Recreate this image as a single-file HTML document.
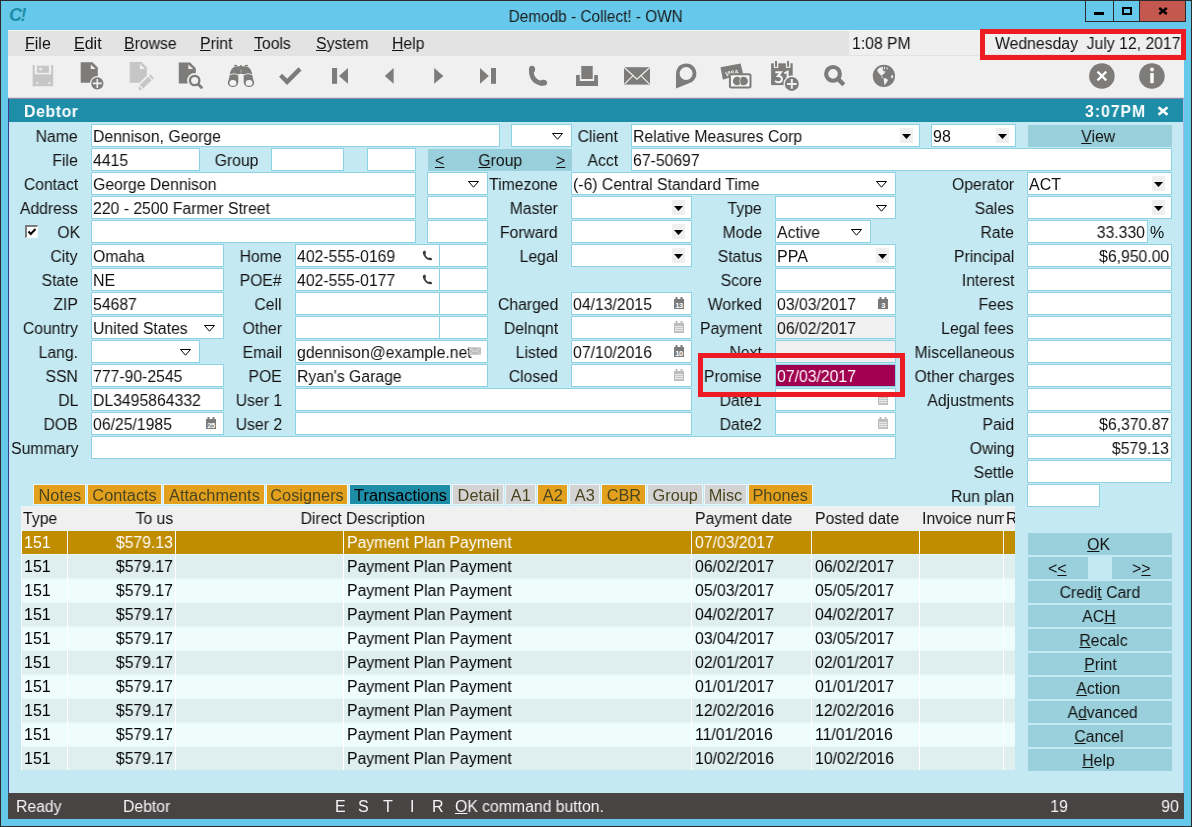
<!DOCTYPE html><html><head><meta charset="utf-8"><style>
*{box-sizing:border-box}
html,body{margin:0;padding:0}
body{width:1192px;height:827px;overflow:hidden;position:relative;background:#66c8ea;font-family:"Liberation Sans",sans-serif;font-size:16px;line-height:20px;color:#111}
div,span{position:absolute;white-space:nowrap}
i{font-style:normal;display:inline-block;transform:scaleX(0.985);will-change:transform}
i.l{transform-origin:0 0}
i.r{transform-origin:100% 0}
i.c{transform-origin:50% 0}
.f{background:#fff;border:1px solid #8dd2e3;height:23px;overflow:hidden}
.btn{background:#9ad0dc}
u{text-decoration:underline;text-underline-offset:1px;text-decoration-thickness:1px}
.tab{top:484px;height:21px;border:1px solid #eaf6f8}
.dd{width:13px;height:15px;background:#efefef;top:3px}
svg{position:absolute}
</style></head><body>
<div style="left:0;top:0;width:1192px;height:827px;border:1px solid #2b2b2b"></div>
<div style="left:9px;top:5px;font:bold italic 18px/20px 'Liberation Sans',sans-serif;color:#1e8ea8;letter-spacing:-1.5px">C!</div>
<div style="left:296px;width:600px;text-align:center;top:7px;color:#1a1a1a"><i class="c" style="transform:scaleX(0.96)">Demodb - Collect! - OWN</i></div>
<div style="left:1085px;top:0;width:101px;height:22px;border:1px solid #2b2b2b;border-top:none"></div>
<div style="left:1113px;top:0;width:1px;height:22px;background:#2b2b2b"></div>
<div style="left:1139px;top:0;width:1px;height:22px;background:#2b2b2b"></div>
<div style="left:1140px;top:1px;width:45px;height:20px;background:#c4584f"></div>
<div style="left:1094px;top:12px;width:10px;height:3px;background:#000"></div>
<div style="left:1122px;top:7px;width:10px;height:8px;border:2px solid #000"></div>
<svg style="left:1158px;top:7px" width="10" height="8"><path d="M1.2 1L8.8 7M8.8 1L1.2 7" stroke="#000" stroke-width="2.4"/></svg>
<div style="left:8px;top:30px;width:1176px;height:26px;background:#e3e3e3;border-top:1px solid #f4f4f4"></div>
<div style="left:25px;top:34px;"><i class="l"><u>F</u>ile</i></div>
<div style="left:74px;top:34px;"><i class="l"><u>E</u>dit</i></div>
<div style="left:124px;top:34px;"><i class="l"><u>B</u>rowse</i></div>
<div style="left:200px;top:34px;"><i class="l"><u>P</u>rint</i></div>
<div style="left:254px;top:34px;"><i class="l"><u>T</u>ools</i></div>
<div style="left:316px;top:34px;"><i class="l"><u>S</u>ystem</i></div>
<div style="left:392px;top:34px;"><i class="l"><u>H</u>elp</i></div>
<div style="left:849px;top:31px;width:131px;height:24px;background:#efefef"></div>
<div style="left:852px;top:34px;"><i class="l">1:08 PM</i></div>
<div style="left:985px;top:34px;width:196px;height:20px;background:#efefef"></div>
<div style="left:995px;top:34px;"><i class="l">Wednesday&nbsp; July 12, 2017</i></div>
<div style="left:980px;top:29px;width:206px;height:31px;border:5px solid #ed1c24;z-index:5"></div>
<div style="left:8px;top:56px;width:1176px;height:42px;background:#f0f0f0;border-bottom:1px solid #d9d9d9"></div>
<svg style="left:0;top:0;will-change:transform" width="1192" height="100" viewBox="0 0 1192 100">
<g fill="#c6c6c6">
 <rect x="32.7" y="65" width="2" height="10"/><rect x="51.2" y="65" width="2" height="10"/>
 <rect x="32.7" y="74.4" width="20.5" height="11.8"/>
 <rect x="37" y="65.7" width="11.9" height="7.1"/>
</g>
<rect x="39.2" y="67.8" width="2.8" height="2.6" fill="#ececec"/>
<rect x="36" y="82.3" width="2.4" height="1.6" fill="#ececec"/><rect x="48" y="82.3" width="2.4" height="1.6" fill="#ececec"/>
<!-- new doc -->
<path d="M80.7 62.2H92.4L97.8 67.6V82.8H80.7Z" fill="#7d7c7a"/>
<path d="M90.8 64.6V69H95.6Z" fill="#f0f0f0"/>
<circle cx="97.3" cy="83.4" r="7.3" fill="#f0f0f0"/>
<circle cx="97.3" cy="83.4" r="6.1" fill="#7d7c7a"/>
<path d="M92.8 83.4H101.8M97.3 78.9V87.9" stroke="#f0f0f0" stroke-width="1.6"/>
<!-- edit doc -->
<path d="M129.7 62.1H141.5L146.9 67.2V75.5L139.5 82.8H129.7Z" fill="#c6c6c6"/>
<path d="M139.9 63.9V69.1H145Z" fill="#f0f0f0"/>
<path d="M141.45 86.7L149.9 78.55" stroke="#c6c6c6" stroke-width="4.9"/>
<path d="M150.8 77.65L152.3 76.15" stroke="#c6c6c6" stroke-width="4.9"/>
<path d="M139 86L142.4 89.6L138.8 90Z" fill="#c6c6c6"/>
<!-- doc search -->
<path d="M178.8 62.5H190L195.8 68.3V83.5H178.8Z" fill="#7d7c7a"/>
<path d="M188.4 64.6V69H193.2Z" fill="#f0f0f0"/>
<circle cx="194.7" cy="80.5" r="7.6" fill="#f0f0f0"/>
<path d="M198 84L202.2 88.2" stroke="#7d7c7a" stroke-width="2.8"/>
<circle cx="194.7" cy="80.5" r="4.7" fill="none" stroke="#7d7c7a" stroke-width="2.3"/>
<!-- binoculars -->
<path d="M229.8 74C230.8 69 233.5 66.4 236.5 66.3H245.5C248.5 66.4 251.2 69 252.2 74Z" fill="#7d7c7a"/>
<rect x="234.2" y="64.9" width="2.9" height="1.2" fill="#7d7c7a"/><rect x="245" y="64.9" width="2.9" height="1.2" fill="#7d7c7a"/>
<circle cx="241" cy="66" r="1" fill="#7d7c7a"/>
<rect x="240.5" y="69.6" width="1" height="3" fill="#a8a8a8"/>
<path d="M230 74L228 82.8H238.3V74Z" fill="#7d7c7a"/>
<path d="M252 74L254 82.8H243.7V74Z" fill="#7d7c7a"/>
<path d="M229.5 74.8Q234 72.2 238.8 75.2M243.2 75.2Q248 72.2 252.5 74.8" stroke="#e8e8e8" stroke-width="0.9" fill="none"/>
<path d="M241 73.2L239.4 76V88H242.6V76Z" fill="#f0f0f0"/>
<ellipse cx="232.9" cy="82.9" rx="5.1" ry="4.2" fill="#7d7c7a"/>
<ellipse cx="249.1" cy="82.9" rx="5.1" ry="4.2" fill="#7d7c7a"/>
<ellipse cx="232.9" cy="82.9" rx="3.45" ry="2.9" fill="#f4f4f4"/>
<ellipse cx="249.1" cy="82.9" rx="3.45" ry="2.9" fill="#f4f4f4"/>
<!-- check -->
<path d="M280.6 75.3L287.1 81.8L300 68.9" stroke="#7d7c7a" stroke-width="4.4" fill="none"/>
<!-- first/prev/next/last -->
<rect x="332" y="68" width="5.1" height="15.8" fill="#7d7c7a"/>
<path d="M339 75.9L348 68V83.8Z" fill="#7d7c7a"/>
<path d="M384.8 75.9L393.6 68V83.8Z" fill="#7d7c7a"/>
<path d="M434.2 68V83.8L443.4 75.9Z" fill="#7d7c7a"/>
<path d="M480 68V83.8L488.8 75.9Z" fill="#7d7c7a"/>
<rect x="491" y="68" width="5" height="15.8" fill="#7d7c7a"/>
<!-- phone -->
<path d="M531.3 70.5Q531.2 81.5 542.5 83.8" stroke="#7d7c7a" stroke-width="4.6" fill="none"/>
<ellipse cx="532" cy="69.3" rx="3.1" ry="3.6" fill="#7d7c7a"/>
<ellipse cx="543.3" cy="82.8" rx="3.8" ry="3.0" fill="#7d7c7a"/>
<!-- inbox -->
<rect x="576.1" y="75" width="3.7" height="11" fill="#7d7c7a"/>
<rect x="594.2" y="75" width="3.7" height="11" fill="#7d7c7a"/>
<rect x="576.1" y="81" width="21.8" height="5" fill="#7d7c7a"/>
<rect x="581.3" y="66" width="11.4" height="13" fill="#7d7c7a"/>
<!-- mail -->
<rect x="624" y="67.2" width="26" height="17.4" fill="#7d7c7a"/>
<path d="M624.3 67.5L637 79.2L649.7 67.5M624.5 84.2L632.6 76.2M649.5 84.2L641.4 76.2" stroke="#f4f4f4" stroke-width="1.1" fill="none"/>
<!-- chat pin -->
<path d="M676 73.5A10.2 10.2 0 1 1 692 82L676 88.6Z" fill="#7d7c7a"/>
<circle cx="686.1" cy="73.5" r="6.5" fill="#f0f0f0"/>
<!-- visa -->
<path d="M720.5 67.3L740.6 63.6L743 73.3L722.9 79.8Z" fill="#7d7c7a"/>
<text x="725" y="75.2" font-family="Liberation Sans" font-size="6.6" font-weight="bold" fill="#f4f4f4" textLength="13.8" lengthAdjust="spacingAndGlyphs" transform="rotate(-11 732 72)">VISA</text>
<rect x="729.9" y="74.3" width="20.6" height="13.3" rx="1.5" fill="#f4f4f4" stroke="#7d7c7a" stroke-width="2"/>
<circle cx="737.2" cy="81" r="4.3" fill="#7d7c7a"/><circle cx="743.6" cy="81" r="4.3" fill="#7d7c7a"/>
<path d="M740.4 77.8Q739.2 81 740.4 84.2" stroke="#ddd" stroke-width="0.8" fill="none"/>
<!-- calendar+ -->
<rect x="771.1" y="63.3" width="21.6" height="21.8" fill="#7d7c7a"/>
<rect x="773.8" y="63" width="4.5" height="4.9" fill="#f0f0f0"/><rect x="785.9" y="63" width="4.5" height="4.9" fill="#f0f0f0"/>
<rect x="775" y="60.9" width="2" height="5.9" fill="#7d7c7a"/><rect x="787.1" y="60.9" width="1.9" height="5.9" fill="#7d7c7a"/>
<path d="M775.3 72.2H781L777.9 76.1C780.5 76.1 781.9 77.3 781.9 79.3C781.9 81.3 780.4 82.2 778.5 82.2C777 82.2 775.9 81.7 775.1 80.8" stroke="#f4f4f4" stroke-width="2" fill="none"/>
<path d="M784.4 73.4L787.6 71.6V83" stroke="#f4f4f4" stroke-width="2" fill="none"/>
<circle cx="791.8" cy="83.9" r="8.3" fill="#f0f0f0"/>
<circle cx="791.8" cy="83.9" r="7" fill="#7d7c7a"/>
<path d="M786.9 83.9H796.7M791.8 79.1V88.8" stroke="#f0f0f0" stroke-width="2"/>
<!-- search -->
<path d="M838.5 79.4L843.8 84.7" stroke="#7d7c7a" stroke-width="4.4"/>
<circle cx="833" cy="73.9" r="6.85" fill="none" stroke="#7d7c7a" stroke-width="4.1"/>
<!-- globe -->
<circle cx="883.9" cy="75.9" r="11.1" fill="#7d7c7a"/>
<path d="M877.1 70.3L879.2 67.7L882.9 66.8L882.7 69.3L883.5 71.2L885.6 71.2L884.6 73.2L882.7 74.7L881.4 75.9L880.8 75.3L878.4 72.8Z" fill="#f0f0f0"/>
<path d="M883.9 66.8H884.9V69.2H883.9Z" fill="#f0f0f0"/>
<path d="M886.3 67.3L887.6 67.7L888 69.5L886.8 69.2Z" fill="#f0f0f0"/>
<circle cx="882.1" cy="77.2" r="0.7" fill="#f0f0f0"/>
<path d="M883.5 78.2L885.8 78.2L888.1 80.1L886.6 82.4L884.6 85.2L884.1 83.2L883.9 80.9Z" fill="#f0f0f0"/>
<path d="M891.2 75.5L892.8 74.9L893.2 77.4L891.8 78.2L891 77.4Z" fill="#f0f0f0"/>
<!-- x circle -->
<circle cx="1101.9" cy="76" r="12.8" fill="#7d7c7a"/>
<path d="M1097.5 71.6L1106.3 80.4M1106.3 71.6L1097.5 80.4" stroke="#fff" stroke-width="2.2"/>
<!-- info circle -->
<circle cx="1151.9" cy="76" r="12.8" fill="#7d7c7a"/>
<circle cx="1152" cy="69.5" r="1.9" fill="#fff"/>
<rect x="1150.3" y="73" width="3.4" height="10.2" fill="#fff"/>
</svg>
<div style="left:8px;top:98px;width:1176px;height:24px;background:#1e8ea8;border-left:1px solid #3d3d8c;border-top:1px solid #8f86b4;border-right:1px solid #a8b8e0"></div>
<div style="left:24px;top:102px;color:#fff;font-weight:bold;letter-spacing:0.65px"><i class="l">Debtor</i></div>
<div style="left:1085px;top:102px;color:#fff;font-weight:bold;letter-spacing:1px"><i class="l">3:07PM</i></div>
<svg style="left:1157px;top:106px" width="12" height="10"><path d="M1.5 1.2L10.5 8.8M10.5 1.2L1.5 8.8" stroke="#fff" stroke-width="2.6"/></svg>
<div style="left:8px;top:122px;width:1176px;height:671px;background:#c5e9f2;border-left:1px solid #3d3d8c;border-right:1px solid #a8b8e0"></div>
<div style="left:8px;top:793px;width:1176px;height:26px;background:#484444"></div>
<div style="left:16px;top:797px;color:#f4f4f4"><i class="l">Ready</i></div>
<div style="left:123px;top:797px;color:#f4f4f4"><i class="l">Debtor</i></div>
<div style="left:335px;top:797px;color:#f4f4f4"><i class="l">E</i></div>
<div style="left:358px;top:797px;color:#f4f4f4"><i class="l">S</i></div>
<div style="left:383px;top:797px;color:#f4f4f4"><i class="l">T</i></div>
<div style="left:410px;top:797px;color:#f4f4f4"><i class="l">I</i></div>
<div style="left:432px;top:797px;color:#f4f4f4"><i class="l">R</i></div>
<div style="left:455px;top:797px;color:#f4f4f4"><i class="l"><u>O</u>K command button.</i></div>
<div style="right:124px;top:797px;color:#f4f4f4"><i class="r">19</i></div>
<div style="right:13px;top:797px;color:#f4f4f4"><i class="r">90</i></div>
<div style="left:0;top:826px;width:1192px;height:1px;background:#2b2b2b"></div>
<div style="right:1114px;top:127px;"><i class="r">Name</i></div>
<div class="f" style="left:91px;top:124px;width:409px"><div style="left:1px;top:2px"><i class="l">Dennison, George</i></div></div>
<div class="f" style="left:511px;top:124px;width:61px"><svg style="right:8px;top:8px" width="11" height="7"><path d="M0.5 0.5H10.5L5.5 6.2Z" fill="none" stroke="#000" stroke-width="1"/></svg></div>
<div style="right:574px;top:127px;"><i class="r">Client</i></div>
<div class="f" style="left:631px;top:124px;width:289px"><div style="left:1px;top:2px"><i class="l">Relative Measures Corp</i></div><div class="dd" style="right:6px"><svg style="left:2px;top:6px" width="9" height="5"><path d="M0 0H9L4.5 5Z" fill="#000"/></svg></div></div>
<div class="f" style="left:931px;top:124px;width:85px"><div style="left:1px;top:2px"><i class="l">98</i></div><div class="dd" style="right:6px"><svg style="left:2px;top:6px" width="9" height="5"><path d="M0 0H9L4.5 5Z" fill="#000"/></svg></div></div>
<div class="btn" style="left:1028px;top:125px;width:144px;height:22px"></div>
<div style="left:798.5px;width:600px;text-align:center;top:127px;"><i class="c"><u>V</u>iew</i></div>
<div style="right:1114px;top:151px;"><i class="r">File</i></div>
<div class="f" style="left:91px;top:148px;width:109px"><div style="left:1px;top:2px"><i class="l">4415</i></div></div>
<div style="right:934px;top:151px;"><i class="r">Group</i></div>
<div class="f" style="left:271px;top:148px;width:73px"></div>
<div class="f" style="left:367px;top:148px;width:49px"></div>
<div class="btn" style="left:428px;top:149px;width:144px;height:22px"></div>
<div style="left:200.0px;width:600px;text-align:center;top:151px;"><i class="c"><u>G</u>roup</i></div>
<div style="left:435px;top:151px;"><i class="l"><u>&lt;</u></i></div>
<div style="right:627px;top:151px;"><i class="r"><u>&gt;</u></i></div>
<div style="right:574px;top:151px;"><i class="r">Acct</i></div>
<div class="f" style="left:631px;top:148px;width:541px"><div style="left:1px;top:2px"><i class="l">67-50697</i></div></div>
<div style="right:1114px;top:175px;"><i class="r">Contact</i></div>
<div class="f" style="left:91px;top:172px;width:325px"><div style="left:1px;top:2px"><i class="l">George Dennison</i></div></div>
<div class="f" style="left:427px;top:172px;width:61px"><svg style="right:8px;top:8px" width="11" height="7"><path d="M0.5 0.5H10.5L5.5 6.2Z" fill="none" stroke="#000" stroke-width="1"/></svg></div>
<div style="right:634px;top:175px;"><i class="r">Timezone</i></div>
<div class="f" style="left:571px;top:172px;width:325px"><div style="left:1px;top:2px"><i class="l">(-6) Central Standard Time</i></div><svg style="right:8px;top:8px" width="11" height="7"><path d="M0.5 0.5H10.5L5.5 6.2Z" fill="none" stroke="#000" stroke-width="1"/></svg></div>
<div style="right:178px;top:175px;"><i class="r">Operator</i></div>
<div class="f" style="left:1027px;top:172px;width:145px"><div style="left:1px;top:2px"><i class="l">ACT</i></div><div class="dd" style="right:6px"><svg style="left:2px;top:6px" width="9" height="5"><path d="M0 0H9L4.5 5Z" fill="#000"/></svg></div></div>
<div style="right:1114px;top:199px;"><i class="r">Address</i></div>
<div class="f" style="left:91px;top:196px;width:325px"><div style="left:1px;top:2px"><i class="l">220 - 2500 Farmer Street</i></div></div>
<div class="f" style="left:427px;top:196px;width:61px"></div>
<div style="right:634px;top:199px;"><i class="r">Master</i></div>
<div class="f" style="left:571px;top:196px;width:121px"><div class="dd" style="right:6px"><svg style="left:2px;top:6px" width="9" height="5"><path d="M0 0H9L4.5 5Z" fill="#000"/></svg></div></div>
<div style="right:430px;top:199px;"><i class="r">Type</i></div>
<div class="f" style="left:775px;top:196px;width:121px"><svg style="right:8px;top:8px" width="11" height="7"><path d="M0.5 0.5H10.5L5.5 6.2Z" fill="none" stroke="#000" stroke-width="1"/></svg></div>
<div style="right:178px;top:199px;"><i class="r">Sales</i></div>
<div class="f" style="left:1027px;top:196px;width:145px"><div class="dd" style="right:6px"><svg style="left:2px;top:6px" width="9" height="5"><path d="M0 0H9L4.5 5Z" fill="#000"/></svg></div></div>
<div style="left:25px;top:225px;width:13px;height:13px;border-style:solid;border-width:2px 1px 1px 2px;border-color:#7a7a7a #f8f8f8 #f8f8f8 #7a7a7a;background:#fff"><svg style="left:0;top:0" width="10" height="10"><path d="M1.5 4.5L3.8 7L8.5 2" stroke="#000" stroke-width="2" fill="none"/></svg></div>
<div style="right:1112px;top:223px;"><i class="r">OK</i></div>
<div class="f" style="left:91px;top:220px;width:325px"></div>
<div class="f" style="left:427px;top:220px;width:61px"></div>
<div style="right:634px;top:223px;"><i class="r">Forward</i></div>
<div class="f" style="left:571px;top:220px;width:121px"><div class="dd" style="right:6px"><svg style="left:2px;top:6px" width="9" height="5"><path d="M0 0H9L4.5 5Z" fill="#000"/></svg></div></div>
<div style="right:430px;top:223px;"><i class="r">Mode</i></div>
<div class="f" style="left:775px;top:220px;width:96px"><div style="left:1px;top:2px"><i class="l">Active</i></div><svg style="right:8px;top:8px" width="11" height="7"><path d="M0.5 0.5H10.5L5.5 6.2Z" fill="none" stroke="#000" stroke-width="1"/></svg></div>
<div style="right:178px;top:223px;"><i class="r">Rate</i></div>
<div class="f" style="left:1027px;top:220px;width:121px"><div style="right:2px;top:2px"><i class="r">33.330</i></div></div>
<div style="left:1150px;top:223px;"><i class="l">%</i></div>
<div style="right:1114px;top:247px;"><i class="r">City</i></div>
<div class="f" style="left:91px;top:244px;width:133px"><div style="left:1px;top:2px"><i class="l">Omaha</i></div></div>
<div style="right:910px;top:247px;"><i class="r">Home</i></div>
<div class="f" style="left:295px;top:244px;width:145px"><div style="left:1px;top:2px"><i class="l">402-555-0169</i></div><svg style="right:6px;top:5px" width="11" height="11"><path d="M2.3 0.6C0.5 1.2 0.4 3.4 1.8 5.8C3.3 8.4 5.6 10.2 7.8 10.2L9.9 9.9C10.4 9.3 10.1 8.4 9.2 8L7.7 7.4L6.3 8.1C5.1 7.5 3.7 5.8 3.3 4.6L4.1 3.2L3.4 1Z" fill="#3a3a3a"/></svg></div>
<div class="f" style="left:439px;top:244px;width:49px"></div>
<div style="right:634px;top:247px;"><i class="r">Legal</i></div>
<div class="f" style="left:571px;top:244px;width:121px"><div class="dd" style="right:6px"><svg style="left:2px;top:6px" width="9" height="5"><path d="M0 0H9L4.5 5Z" fill="#000"/></svg></div></div>
<div style="right:430px;top:247px;"><i class="r">Status</i></div>
<div class="f" style="left:775px;top:244px;width:121px"><div style="left:1px;top:2px"><i class="l">PPA</i></div><div class="dd" style="right:6px"><svg style="left:2px;top:6px" width="9" height="5"><path d="M0 0H9L4.5 5Z" fill="#000"/></svg></div></div>
<div style="right:178px;top:247px;"><i class="r">Principal</i></div>
<div class="f" style="left:1027px;top:244px;width:145px"><div style="right:2px;top:2px"><i class="r">$6,950.00</i></div></div>
<div style="right:1114px;top:271px;"><i class="r">State</i></div>
<div class="f" style="left:91px;top:268px;width:133px"><div style="left:1px;top:2px"><i class="l">NE</i></div></div>
<div style="right:910px;top:271px;"><i class="r">POE#</i></div>
<div class="f" style="left:295px;top:268px;width:145px"><div style="left:1px;top:2px"><i class="l">402-555-0177</i></div><svg style="right:6px;top:5px" width="11" height="11"><path d="M2.3 0.6C0.5 1.2 0.4 3.4 1.8 5.8C3.3 8.4 5.6 10.2 7.8 10.2L9.9 9.9C10.4 9.3 10.1 8.4 9.2 8L7.7 7.4L6.3 8.1C5.1 7.5 3.7 5.8 3.3 4.6L4.1 3.2L3.4 1Z" fill="#3a3a3a"/></svg></div>
<div class="f" style="left:439px;top:268px;width:49px"></div>
<div style="right:430px;top:271px;"><i class="r">Score</i></div>
<div class="f" style="left:775px;top:268px;width:121px"></div>
<div style="right:178px;top:271px;"><i class="r">Interest</i></div>
<div class="f" style="left:1027px;top:268px;width:145px"></div>
<div style="right:1114px;top:295px;"><i class="r">ZIP</i></div>
<div class="f" style="left:91px;top:292px;width:133px"><div style="left:1px;top:2px"><i class="l">54687</i></div></div>
<div style="right:910px;top:295px;"><i class="r">Cell</i></div>
<div class="f" style="left:295px;top:292px;width:145px"></div>
<div class="f" style="left:439px;top:292px;width:49px"></div>
<div style="right:634px;top:295px;"><i class="r">Charged</i></div>
<div class="f" style="left:571px;top:292px;width:121px"><div style="left:1px;top:2px"><i class="l">04/13/2015</i></div><svg style="right:7px;top:4px" width="10" height="12"><rect x="0" y="2" width="10" height="10" fill="#7a7a7a"/><rect x="1.5" y="0" width="2" height="3" fill="#7a7a7a"/><rect x="6.5" y="0" width="2" height="3" fill="#7a7a7a"/><text x="5" y="10.6" font-size="7.5" fill="#fff" text-anchor="middle" font-family="Liberation Sans" font-weight="bold" letter-spacing="-0.5">13</text></svg></div>
<div style="right:430px;top:295px;"><i class="r">Worked</i></div>
<div class="f" style="left:775px;top:292px;width:121px"><div style="left:1px;top:2px"><i class="l">03/03/2017</i></div><svg style="right:7px;top:4px" width="10" height="12"><rect x="0" y="2" width="10" height="10" fill="#7a7a7a"/><rect x="1.5" y="0" width="2" height="3" fill="#7a7a7a"/><rect x="6.5" y="0" width="2" height="3" fill="#7a7a7a"/><text x="5" y="10.6" font-size="7.5" fill="#fff" text-anchor="middle" font-family="Liberation Sans" font-weight="bold" letter-spacing="-0.5">3</text></svg></div>
<div style="right:178px;top:295px;"><i class="r">Fees</i></div>
<div class="f" style="left:1027px;top:292px;width:145px"></div>
<div style="right:1114px;top:319px;"><i class="r">Country</i></div>
<div class="f" style="left:91px;top:316px;width:133px"><div style="left:1px;top:2px"><i class="l">United States</i></div><svg style="right:8px;top:8px" width="11" height="7"><path d="M0.5 0.5H10.5L5.5 6.2Z" fill="none" stroke="#000" stroke-width="1"/></svg></div>
<div style="right:910px;top:319px;"><i class="r">Other</i></div>
<div class="f" style="left:295px;top:316px;width:145px"></div>
<div class="f" style="left:439px;top:316px;width:49px"></div>
<div style="right:634px;top:319px;"><i class="r">Delnqnt</i></div>
<div class="f" style="left:571px;top:316px;width:121px"><svg style="right:7px;top:4px" width="10" height="12"><rect x="0" y="2" width="10" height="10" fill="#bdbdbd"/><rect x="1.5" y="0" width="2" height="3" fill="#bdbdbd"/><rect x="6.5" y="0" width="2" height="3" fill="#bdbdbd"/><rect x="1" y="5" width="8" height="1.2" fill="#e8e8e8"/><rect x="1" y="7" width="8" height="1.2" fill="#e8e8e8"/><rect x="1" y="9" width="8" height="1.2" fill="#e8e8e8"/></svg></div>
<div style="right:430px;top:319px;"><i class="r">Payment</i></div>
<div class="f" style="left:775px;top:316px;width:121px;background:#f0f0f0"><div style="left:1px;top:2px"><i class="l">06/02/2017</i></div></div>
<div style="right:178px;top:319px;"><i class="r">Legal fees</i></div>
<div class="f" style="left:1027px;top:316px;width:145px"></div>
<div style="right:1114px;top:343px;"><i class="r">Lang.</i></div>
<div class="f" style="left:91px;top:340px;width:109px"><svg style="right:8px;top:8px" width="11" height="7"><path d="M0.5 0.5H10.5L5.5 6.2Z" fill="none" stroke="#000" stroke-width="1"/></svg></div>
<div style="right:910px;top:343px;"><i class="r">Email</i></div>
<div class="f" style="left:295px;top:340px;width:193px"><div style="left:1px;top:2px"><i class="l">gdennison@example.net</i></div><svg style="right:6px;top:6px" width="12" height="8"><rect x="0" y="0.3" width="12" height="7.4" rx="0.6" fill="#bdbdbd"/><path d="M0.6 0.8L6 4.8L11.4 0.8M0.6 7.3L4.2 3.6M11.4 7.3L7.8 3.6" stroke="#e6e6e6" stroke-width="0.8" fill="none"/></svg></div>
<div style="right:634px;top:343px;"><i class="r">Listed</i></div>
<div class="f" style="left:571px;top:340px;width:121px"><div style="left:1px;top:2px"><i class="l">07/10/2016</i></div><svg style="right:7px;top:4px" width="10" height="12"><rect x="0" y="2" width="10" height="10" fill="#7a7a7a"/><rect x="1.5" y="0" width="2" height="3" fill="#7a7a7a"/><rect x="6.5" y="0" width="2" height="3" fill="#7a7a7a"/><text x="5" y="10.6" font-size="7.5" fill="#fff" text-anchor="middle" font-family="Liberation Sans" font-weight="bold" letter-spacing="-0.5">10</text></svg></div>
<div style="right:430px;top:343px;"><i class="r">Next</i></div>
<div class="f" style="left:775px;top:340px;width:121px;background:#f0f0f0"></div>
<div style="right:178px;top:343px;"><i class="r">Miscellaneous</i></div>
<div class="f" style="left:1027px;top:340px;width:145px"></div>
<div style="right:1114px;top:367px;"><i class="r">SSN</i></div>
<div class="f" style="left:91px;top:364px;width:133px"><div style="left:1px;top:2px"><i class="l">777-90-2545</i></div></div>
<div style="right:910px;top:367px;"><i class="r">POE</i></div>
<div class="f" style="left:295px;top:364px;width:193px"><div style="left:1px;top:2px"><i class="l">Ryan's Garage</i></div></div>
<div style="right:634px;top:367px;"><i class="r">Closed</i></div>
<div class="f" style="left:571px;top:364px;width:121px"><svg style="right:7px;top:4px" width="10" height="12"><rect x="0" y="2" width="10" height="10" fill="#bdbdbd"/><rect x="1.5" y="0" width="2" height="3" fill="#bdbdbd"/><rect x="6.5" y="0" width="2" height="3" fill="#bdbdbd"/><rect x="1" y="5" width="8" height="1.2" fill="#e8e8e8"/><rect x="1" y="7" width="8" height="1.2" fill="#e8e8e8"/><rect x="1" y="9" width="8" height="1.2" fill="#e8e8e8"/></svg></div>
<div style="right:430px;top:367px;"><i class="r">Promise</i></div>
<div class="f" style="left:775px;top:364px;width:121px;background:#a0004f"><div style="left:1px;top:2px;color:#fff"><i class="l">07/03/2017</i></div></div>
<div style="right:178px;top:367px;"><i class="r">Other charges</i></div>
<div class="f" style="left:1027px;top:364px;width:145px"></div>
<div style="right:1114px;top:391px;"><i class="r">DL</i></div>
<div class="f" style="left:91px;top:388px;width:133px"><div style="left:1px;top:2px"><i class="l">DL3495864332</i></div></div>
<div style="right:910px;top:391px;"><i class="r">User 1</i></div>
<div class="f" style="left:295px;top:388px;width:397px"></div>
<div style="right:430px;top:391px;"><i class="r">Date1</i></div>
<div class="f" style="left:775px;top:388px;width:121px"><svg style="right:7px;top:4px" width="10" height="12"><rect x="0" y="2" width="10" height="10" fill="#bdbdbd"/><rect x="1.5" y="0" width="2" height="3" fill="#bdbdbd"/><rect x="6.5" y="0" width="2" height="3" fill="#bdbdbd"/><rect x="1" y="5" width="8" height="1.2" fill="#e8e8e8"/><rect x="1" y="7" width="8" height="1.2" fill="#e8e8e8"/><rect x="1" y="9" width="8" height="1.2" fill="#e8e8e8"/></svg></div>
<div style="right:178px;top:391px;"><i class="r">Adjustments</i></div>
<div class="f" style="left:1027px;top:388px;width:145px"></div>
<div style="right:1114px;top:415px;"><i class="r">DOB</i></div>
<div class="f" style="left:91px;top:412px;width:133px"><div style="left:1px;top:2px"><i class="l">06/25/1985</i></div><svg style="right:7px;top:4px" width="10" height="12"><rect x="0" y="2" width="10" height="10" fill="#7a7a7a"/><rect x="1.5" y="0" width="2" height="3" fill="#7a7a7a"/><rect x="6.5" y="0" width="2" height="3" fill="#7a7a7a"/><text x="5" y="10.6" font-size="7.5" fill="#fff" text-anchor="middle" font-family="Liberation Sans" font-weight="bold" letter-spacing="-0.5">25</text></svg></div>
<div style="right:910px;top:415px;"><i class="r">User 2</i></div>
<div class="f" style="left:295px;top:412px;width:397px"></div>
<div style="right:430px;top:415px;"><i class="r">Date2</i></div>
<div class="f" style="left:775px;top:412px;width:121px"><svg style="right:7px;top:4px" width="10" height="12"><rect x="0" y="2" width="10" height="10" fill="#bdbdbd"/><rect x="1.5" y="0" width="2" height="3" fill="#bdbdbd"/><rect x="6.5" y="0" width="2" height="3" fill="#bdbdbd"/><rect x="1" y="5" width="8" height="1.2" fill="#e8e8e8"/><rect x="1" y="7" width="8" height="1.2" fill="#e8e8e8"/><rect x="1" y="9" width="8" height="1.2" fill="#e8e8e8"/></svg></div>
<div style="right:178px;top:415px;"><i class="r">Paid</i></div>
<div class="f" style="left:1027px;top:412px;width:145px"><div style="right:2px;top:2px"><i class="r">$6,370.87</i></div></div>
<div style="right:1114px;top:439px;"><i class="r">Summary</i></div>
<div class="f" style="left:91px;top:436px;width:805px"></div>
<div style="right:178px;top:439px;"><i class="r">Owing</i></div>
<div class="f" style="left:1027px;top:436px;width:145px"><div style="right:2px;top:2px"><i class="r">$579.13</i></div></div>
<div style="right:178px;top:463px;"><i class="r">Settle</i></div>
<div class="f" style="left:1027px;top:460px;width:145px"></div>
<div style="right:178px;top:487px;"><i class="r">Run plan</i></div>
<div class="f" style="left:1027px;top:484px;width:73px"></div>
<div style="left:698px;top:353px;width:207px;height:44px;border:5px solid #ed1c24;z-index:5"></div>
<div class="tab" style="left:33px;width:53px;background:#e3a01c"></div>
<div style="left:-240.5px;width:600px;text-align:center;top:486px;color:#4a4620"><i class="c" style="transform:scaleX(1.02)">Notes</i></div>
<div class="tab" style="left:87px;width:75px;background:#e3a01c"></div>
<div style="left:-175.5px;width:600px;text-align:center;top:486px;color:#4a4620"><i class="c" style="transform:scaleX(1.02)">Contacts</i></div>
<div class="tab" style="left:163px;width:102px;background:#e3a01c"></div>
<div style="left:-86.0px;width:600px;text-align:center;top:486px;color:#4a4620"><i class="c" style="transform:scaleX(1.02)">Attachments</i></div>
<div class="tab" style="left:266px;width:82px;background:#e3a01c"></div>
<div style="left:7.0px;width:600px;text-align:center;top:486px;color:#4a4620"><i class="c" style="transform:scaleX(1.02)">Cosigners</i></div>
<div class="tab" style="left:349px;width:102px;background:#1e8ea8"></div>
<div style="left:100.0px;width:600px;text-align:center;top:486px;color:#000"><i class="c" style="transform:scaleX(1.02)">Transactions</i></div>
<div class="tab" style="left:452px;width:52px;background:#d3d3d3"></div>
<div style="left:178.0px;width:600px;text-align:center;top:486px;color:#4a4620"><i class="c" style="transform:scaleX(1.02)">Detail</i></div>
<div class="tab" style="left:505px;width:31px;background:#d3d3d3"></div>
<div style="left:220.5px;width:600px;text-align:center;top:486px;color:#4a4620"><i class="c" style="transform:scaleX(1.02)">A1</i></div>
<div class="tab" style="left:537px;width:31px;background:#e3a01c"></div>
<div style="left:252.5px;width:600px;text-align:center;top:486px;color:#4a4620"><i class="c" style="transform:scaleX(1.02)">A2</i></div>
<div class="tab" style="left:569px;width:31px;background:#d3d3d3"></div>
<div style="left:284.5px;width:600px;text-align:center;top:486px;color:#4a4620"><i class="c" style="transform:scaleX(1.02)">A3</i></div>
<div class="tab" style="left:601px;width:45px;background:#e3a01c"></div>
<div style="left:323.5px;width:600px;text-align:center;top:486px;color:#4a4620"><i class="c" style="transform:scaleX(1.02)">CBR</i></div>
<div class="tab" style="left:647px;width:56px;background:#d3d3d3"></div>
<div style="left:375.0px;width:600px;text-align:center;top:486px;color:#4a4620"><i class="c" style="transform:scaleX(1.02)">Group</i></div>
<div class="tab" style="left:704px;width:43px;background:#d3d3d3"></div>
<div style="left:425.5px;width:600px;text-align:center;top:486px;color:#4a4620"><i class="c" style="transform:scaleX(1.02)">Misc</i></div>
<div class="tab" style="left:748px;width:65px;background:#e3a01c"></div>
<div style="left:480.5px;width:600px;text-align:center;top:486px;color:#4a4620"><i class="c" style="transform:scaleX(1.02)">Phones</i></div>
<div style="left:21px;top:506px;width:994px;height:24px;background:#f0f0f0;border-top:1px solid #e6f6fa"></div>
<div style="left:23px;top:509px;"><i class="l">Type</i></div>
<div style="right:1019px;top:509px;"><i class="r">To us</i></div>
<div style="right:850px;top:509px;"><i class="r">Direct</i></div>
<div style="left:346px;top:509px;"><i class="l">Description</i></div>
<div style="left:695px;top:509px;"><i class="l">Payment date</i></div>
<div style="left:815px;top:509px;"><i class="l">Posted date</i></div>
<div style="left:919px;top:507px;width:85px;height:23px;overflow:hidden;background:#f0f0f0"><div style="left:3px;top:2px;"><i class="l">Invoice number</i></div></div>
<div style="left:1004px;top:507px;width:11px;height:23px;overflow:hidden;background:#f0f0f0"><div style="left:2px;top:2px;"><i class="l">R</i></div></div>
<div style="left:21px;top:530px;width:994px;height:24px;background:#c08c00;color:#fff;border-top:1px solid #e6f6fa;border-left:1px solid #fff">
<div style="left:45px;top:-1px;width:1px;height:24px;background:#fff"></div>
<div style="left:153px;top:-1px;width:1px;height:24px;background:#fff"></div>
<div style="left:321px;top:-1px;width:1px;height:24px;background:#fff"></div>
<div style="left:669px;top:-1px;width:1px;height:24px;background:#fff"></div>
<div style="left:789px;top:-1px;width:1px;height:24px;background:#fff"></div>
<div style="left:897px;top:-1px;width:1px;height:24px;background:#fff"></div>
<div style="left:981px;top:-1px;width:1px;height:24px;background:#fff"></div>
<div style="left:2px;top:2px;"><i class="l">151</i></div>
<div style="right:842px;top:2px"><i class="r">$579.13</i></div>
<div style="left:325px;top:2px;"><i class="l">Payment Plan Payment</i></div>
<div style="left:673px;top:2px;"><i class="l">07/03/2017</i></div>
</div>
<div style="left:21px;top:554px;width:994px;height:24px;background:#dfeeee;color:#000;border-top:1px solid #e6f6fa;border-left:1px solid #fff">
<div style="left:45px;top:-1px;width:1px;height:24px;background:#fff"></div>
<div style="left:153px;top:-1px;width:1px;height:24px;background:#fff"></div>
<div style="left:321px;top:-1px;width:1px;height:24px;background:#fff"></div>
<div style="left:669px;top:-1px;width:1px;height:24px;background:#fff"></div>
<div style="left:789px;top:-1px;width:1px;height:24px;background:#fff"></div>
<div style="left:897px;top:-1px;width:1px;height:24px;background:#fff"></div>
<div style="left:981px;top:-1px;width:1px;height:24px;background:#fff"></div>
<div style="left:2px;top:2px;"><i class="l">151</i></div>
<div style="right:842px;top:2px"><i class="r">$579.17</i></div>
<div style="left:325px;top:2px;"><i class="l">Payment Plan Payment</i></div>
<div style="left:673px;top:2px;"><i class="l">06/02/2017</i></div>
<div style="left:793px;top:2px;"><i class="l">06/02/2017</i></div>
</div>
<div style="left:21px;top:578px;width:994px;height:24px;background:#effcfc;color:#000;border-top:1px solid #e6f6fa;border-left:1px solid #fff">
<div style="left:45px;top:-1px;width:1px;height:24px;background:#fff"></div>
<div style="left:153px;top:-1px;width:1px;height:24px;background:#fff"></div>
<div style="left:321px;top:-1px;width:1px;height:24px;background:#fff"></div>
<div style="left:669px;top:-1px;width:1px;height:24px;background:#fff"></div>
<div style="left:789px;top:-1px;width:1px;height:24px;background:#fff"></div>
<div style="left:897px;top:-1px;width:1px;height:24px;background:#fff"></div>
<div style="left:981px;top:-1px;width:1px;height:24px;background:#fff"></div>
<div style="left:2px;top:2px;"><i class="l">151</i></div>
<div style="right:842px;top:2px"><i class="r">$579.17</i></div>
<div style="left:325px;top:2px;"><i class="l">Payment Plan Payment</i></div>
<div style="left:673px;top:2px;"><i class="l">05/03/2017</i></div>
<div style="left:793px;top:2px;"><i class="l">05/05/2017</i></div>
</div>
<div style="left:21px;top:602px;width:994px;height:24px;background:#dfeeee;color:#000;border-top:1px solid #e6f6fa;border-left:1px solid #fff">
<div style="left:45px;top:-1px;width:1px;height:24px;background:#fff"></div>
<div style="left:153px;top:-1px;width:1px;height:24px;background:#fff"></div>
<div style="left:321px;top:-1px;width:1px;height:24px;background:#fff"></div>
<div style="left:669px;top:-1px;width:1px;height:24px;background:#fff"></div>
<div style="left:789px;top:-1px;width:1px;height:24px;background:#fff"></div>
<div style="left:897px;top:-1px;width:1px;height:24px;background:#fff"></div>
<div style="left:981px;top:-1px;width:1px;height:24px;background:#fff"></div>
<div style="left:2px;top:2px;"><i class="l">151</i></div>
<div style="right:842px;top:2px"><i class="r">$579.17</i></div>
<div style="left:325px;top:2px;"><i class="l">Payment Plan Payment</i></div>
<div style="left:673px;top:2px;"><i class="l">04/02/2017</i></div>
<div style="left:793px;top:2px;"><i class="l">04/02/2017</i></div>
</div>
<div style="left:21px;top:626px;width:994px;height:24px;background:#effcfc;color:#000;border-top:1px solid #e6f6fa;border-left:1px solid #fff">
<div style="left:45px;top:-1px;width:1px;height:24px;background:#fff"></div>
<div style="left:153px;top:-1px;width:1px;height:24px;background:#fff"></div>
<div style="left:321px;top:-1px;width:1px;height:24px;background:#fff"></div>
<div style="left:669px;top:-1px;width:1px;height:24px;background:#fff"></div>
<div style="left:789px;top:-1px;width:1px;height:24px;background:#fff"></div>
<div style="left:897px;top:-1px;width:1px;height:24px;background:#fff"></div>
<div style="left:981px;top:-1px;width:1px;height:24px;background:#fff"></div>
<div style="left:2px;top:2px;"><i class="l">151</i></div>
<div style="right:842px;top:2px"><i class="r">$579.17</i></div>
<div style="left:325px;top:2px;"><i class="l">Payment Plan Payment</i></div>
<div style="left:673px;top:2px;"><i class="l">03/04/2017</i></div>
<div style="left:793px;top:2px;"><i class="l">03/05/2017</i></div>
</div>
<div style="left:21px;top:650px;width:994px;height:24px;background:#dfeeee;color:#000;border-top:1px solid #e6f6fa;border-left:1px solid #fff">
<div style="left:45px;top:-1px;width:1px;height:24px;background:#fff"></div>
<div style="left:153px;top:-1px;width:1px;height:24px;background:#fff"></div>
<div style="left:321px;top:-1px;width:1px;height:24px;background:#fff"></div>
<div style="left:669px;top:-1px;width:1px;height:24px;background:#fff"></div>
<div style="left:789px;top:-1px;width:1px;height:24px;background:#fff"></div>
<div style="left:897px;top:-1px;width:1px;height:24px;background:#fff"></div>
<div style="left:981px;top:-1px;width:1px;height:24px;background:#fff"></div>
<div style="left:2px;top:2px;"><i class="l">151</i></div>
<div style="right:842px;top:2px"><i class="r">$579.17</i></div>
<div style="left:325px;top:2px;"><i class="l">Payment Plan Payment</i></div>
<div style="left:673px;top:2px;"><i class="l">02/01/2017</i></div>
<div style="left:793px;top:2px;"><i class="l">02/01/2017</i></div>
</div>
<div style="left:21px;top:674px;width:994px;height:24px;background:#effcfc;color:#000;border-top:1px solid #e6f6fa;border-left:1px solid #fff">
<div style="left:45px;top:-1px;width:1px;height:24px;background:#fff"></div>
<div style="left:153px;top:-1px;width:1px;height:24px;background:#fff"></div>
<div style="left:321px;top:-1px;width:1px;height:24px;background:#fff"></div>
<div style="left:669px;top:-1px;width:1px;height:24px;background:#fff"></div>
<div style="left:789px;top:-1px;width:1px;height:24px;background:#fff"></div>
<div style="left:897px;top:-1px;width:1px;height:24px;background:#fff"></div>
<div style="left:981px;top:-1px;width:1px;height:24px;background:#fff"></div>
<div style="left:2px;top:2px;"><i class="l">151</i></div>
<div style="right:842px;top:2px"><i class="r">$579.17</i></div>
<div style="left:325px;top:2px;"><i class="l">Payment Plan Payment</i></div>
<div style="left:673px;top:2px;"><i class="l">01/01/2017</i></div>
<div style="left:793px;top:2px;"><i class="l">01/01/2017</i></div>
</div>
<div style="left:21px;top:698px;width:994px;height:24px;background:#dfeeee;color:#000;border-top:1px solid #e6f6fa;border-left:1px solid #fff">
<div style="left:45px;top:-1px;width:1px;height:24px;background:#fff"></div>
<div style="left:153px;top:-1px;width:1px;height:24px;background:#fff"></div>
<div style="left:321px;top:-1px;width:1px;height:24px;background:#fff"></div>
<div style="left:669px;top:-1px;width:1px;height:24px;background:#fff"></div>
<div style="left:789px;top:-1px;width:1px;height:24px;background:#fff"></div>
<div style="left:897px;top:-1px;width:1px;height:24px;background:#fff"></div>
<div style="left:981px;top:-1px;width:1px;height:24px;background:#fff"></div>
<div style="left:2px;top:2px;"><i class="l">151</i></div>
<div style="right:842px;top:2px"><i class="r">$579.17</i></div>
<div style="left:325px;top:2px;"><i class="l">Payment Plan Payment</i></div>
<div style="left:673px;top:2px;"><i class="l">12/02/2016</i></div>
<div style="left:793px;top:2px;"><i class="l">12/02/2016</i></div>
</div>
<div style="left:21px;top:722px;width:994px;height:24px;background:#effcfc;color:#000;border-top:1px solid #e6f6fa;border-left:1px solid #fff">
<div style="left:45px;top:-1px;width:1px;height:24px;background:#fff"></div>
<div style="left:153px;top:-1px;width:1px;height:24px;background:#fff"></div>
<div style="left:321px;top:-1px;width:1px;height:24px;background:#fff"></div>
<div style="left:669px;top:-1px;width:1px;height:24px;background:#fff"></div>
<div style="left:789px;top:-1px;width:1px;height:24px;background:#fff"></div>
<div style="left:897px;top:-1px;width:1px;height:24px;background:#fff"></div>
<div style="left:981px;top:-1px;width:1px;height:24px;background:#fff"></div>
<div style="left:2px;top:2px;"><i class="l">151</i></div>
<div style="right:842px;top:2px"><i class="r">$579.17</i></div>
<div style="left:325px;top:2px;"><i class="l">Payment Plan Payment</i></div>
<div style="left:673px;top:2px;"><i class="l">11/01/2016</i></div>
<div style="left:793px;top:2px;"><i class="l">11/01/2016</i></div>
</div>
<div style="left:21px;top:746px;width:994px;height:24px;background:#dfeeee;color:#000;border-top:1px solid #e6f6fa;border-left:1px solid #fff">
<div style="left:45px;top:-1px;width:1px;height:24px;background:#fff"></div>
<div style="left:153px;top:-1px;width:1px;height:24px;background:#fff"></div>
<div style="left:321px;top:-1px;width:1px;height:24px;background:#fff"></div>
<div style="left:669px;top:-1px;width:1px;height:24px;background:#fff"></div>
<div style="left:789px;top:-1px;width:1px;height:24px;background:#fff"></div>
<div style="left:897px;top:-1px;width:1px;height:24px;background:#fff"></div>
<div style="left:981px;top:-1px;width:1px;height:24px;background:#fff"></div>
<div style="left:2px;top:2px;"><i class="l">151</i></div>
<div style="right:842px;top:2px"><i class="r">$579.17</i></div>
<div style="left:325px;top:2px;"><i class="l">Payment Plan Payment</i></div>
<div style="left:673px;top:2px;"><i class="l">10/02/2016</i></div>
<div style="left:793px;top:2px;"><i class="l">10/02/2016</i></div>
</div>
<div class="btn" style="left:1028px;top:533px;width:144px;height:22px"></div>
<div style="left:798.5px;width:600px;text-align:center;top:535px;"><i class="c"><u>O</u>K</i></div>
<div class="btn" style="left:1028px;top:581px;width:144px;height:22px"></div>
<div style="left:800.0px;width:600px;text-align:center;top:583px;"><i class="c">Credi<u>t</u> Card</i></div>
<div class="btn" style="left:1028px;top:605px;width:144px;height:22px"></div>
<div style="left:799.3px;width:600px;text-align:center;top:607px;"><i class="c">AC<u>H</u></i></div>
<div class="btn" style="left:1028px;top:629px;width:144px;height:22px"></div>
<div style="left:803.0px;width:600px;text-align:center;top:631px;"><i class="c"><u>R</u>ecalc</i></div>
<div class="btn" style="left:1028px;top:653px;width:144px;height:22px"></div>
<div style="left:800.5px;width:600px;text-align:center;top:655px;"><i class="c"><u>P</u>rint</i></div>
<div class="btn" style="left:1028px;top:677px;width:144px;height:22px"></div>
<div style="left:798.5px;width:600px;text-align:center;top:679px;"><i class="c"><u>A</u>ction</i></div>
<div class="btn" style="left:1028px;top:701px;width:144px;height:22px"></div>
<div style="left:802.3px;width:600px;text-align:center;top:703px;"><i class="c">A<u>d</u>vanced</i></div>
<div class="btn" style="left:1028px;top:725px;width:144px;height:22px"></div>
<div style="left:798.5px;width:600px;text-align:center;top:727px;"><i class="c"><u>C</u>ancel</i></div>
<div class="btn" style="left:1028px;top:749px;width:144px;height:22px"></div>
<div style="left:798.5px;width:600px;text-align:center;top:751px;"><i class="c"><u>H</u>elp</i></div>
<div class="btn" style="left:1028px;top:557px;width:60px;height:22px"></div>
<div style="left:757.0px;width:600px;text-align:center;top:559px;"><i class="c">&lt;<u>&lt;</u></i></div>
<div class="btn" style="left:1112px;top:557px;width:60px;height:22px"></div>
<div style="left:841.0px;width:600px;text-align:center;top:559px;"><i class="c">&gt;<u>&gt;</u></i></div>
</body></html>
